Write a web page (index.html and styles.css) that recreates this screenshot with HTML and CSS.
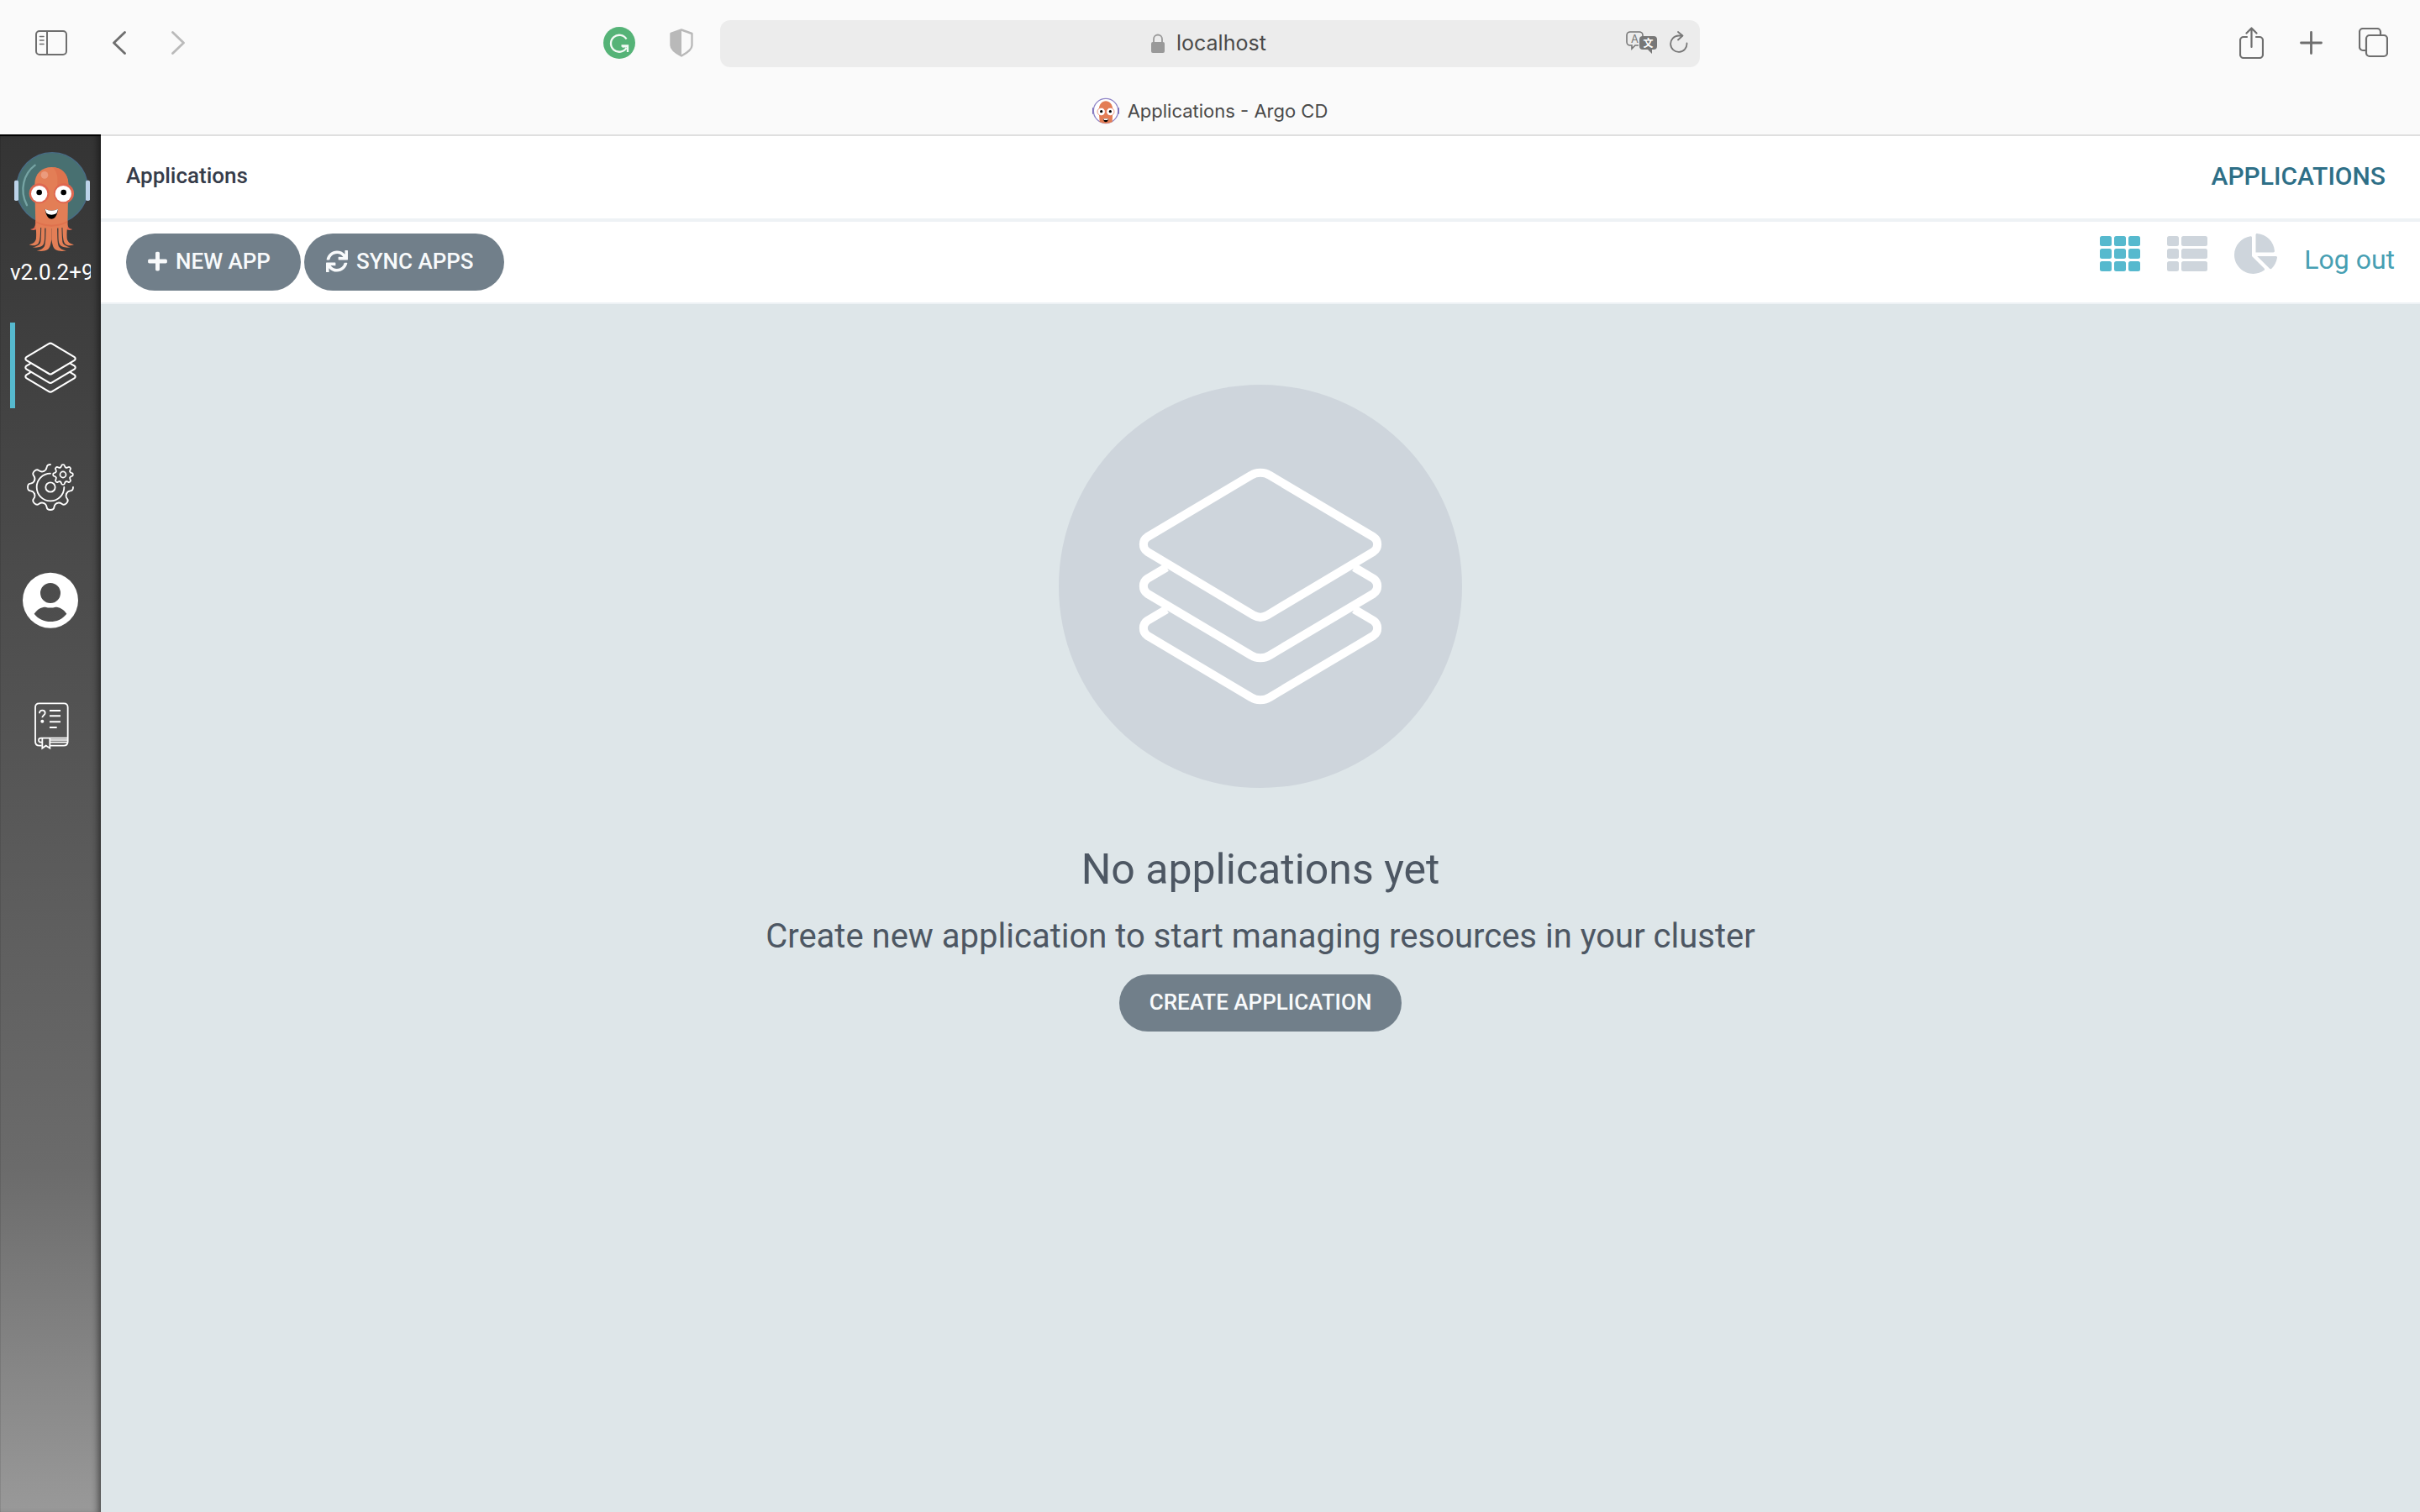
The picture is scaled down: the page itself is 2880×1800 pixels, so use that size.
FILE: index.html
```html
<!DOCTYPE html>
<html lang="en">
<head>
<meta charset="utf-8">
<meta name="viewport" content="width=device-width, initial-scale=1">
<title>Applications - Argo CD</title>
<link rel="stylesheet" href="styles.css">
</head>
<body>
<header class="browser">
  <div class="browser-bar">
    <div class="browser-group">
      <button class="icon-button" type="button" aria-label="Show sidebar">
        <svg width="38" height="30" viewBox="0 0 38 30" fill="none" stroke="#6e6e6e" stroke-width="2"><rect x="1" y="1" width="36" height="28" rx="4"/><path d="M14 1v28"/><path d="M5.500 7.500h4.500M5.500 12h4.500M5.500 16.500h4.500" stroke-width="1.600" stroke-linecap="round"/></svg>
      </button>
      <button class="icon-button" type="button" aria-label="Back">
        <svg width="16" height="28" viewBox="0 0 16 28" fill="none" stroke="#6e6e6e" stroke-width="2.800" stroke-linecap="round" stroke-linejoin="round"><path d="M14.500 1.500 1.500 14l13 12.500"/></svg>
      </button>
      <button class="icon-button" type="button" aria-label="Forward">
        <svg width="16" height="28" viewBox="0 0 16 28" fill="none" stroke="#bababa" stroke-width="2.800" stroke-linecap="round" stroke-linejoin="round"><path d="M1.500 1.500 14.500 14l-13 12.500"/></svg>
      </button>
      <div class="extensions">
        <button class="icon-button" type="button" aria-label="Grammarly">
          <svg width="38" height="38" viewBox="0 0 38 38"><circle cx="19" cy="19" r="19" fill="#55b377"/><path d="M27.500 14.500A10 10 0 1 0 27.500 25M21.500 22.500h7.500v7.500M22.500 23.500 28.500 23" fill="none" stroke="#f2faf5" stroke-width="2.300"/></svg>
        </button>
        <button class="icon-button" type="button" aria-label="Privacy report">
          <svg width="28" height="34" viewBox="0 0 28 34"><path d="M14 1.500 26.500 6V20c0 5-5 8.500-12.500 12.500C6.500 28.500 1.500 25 1.500 20V6Z" fill="none" stroke="#b9b9b9" stroke-width="2.400" stroke-linejoin="round"/><path d="M14 1.500V32.500C6.500 28.500 1.500 25 1.500 20V6Z" fill="#b9b9b9"/></svg>
        </button>
      </div>
    </div>
    <div class="address">
      <svg class="lock" width="16" height="24" viewBox="0 0 16 24"><rect y="10" width="16" height="13" rx="2" fill="#999"/><path d="M3 11V6.500a5 5 0 0 1 10 0V11" fill="none" stroke="#999" stroke-width="1.800"/></svg>
      <input class="address-input" type="text" value="localhost" aria-label="Address">
      <div class="address-tools">
        <button class="icon-button" type="button" aria-label="Translate">
          <svg width="37" height="27" viewBox="0 0 37 27"><path d="M15 17h-4l-4 4v-4H5a4 4 0 0 1-4-4V5a4 4 0 0 1 4-4h11a4 4 0 0 1 4 4v2" fill="none" stroke="#777" stroke-width="1.600"/><text x="10.500" y="13.500" class="glyph-latin">A</text><path d="M20 6h13a4 4 0 0 1 4 4v8a4 4 0 0 1-4 4h-2v5l-5-5h-6a4 4 0 0 1-4-4v-8a4 4 0 0 1 4-4Z" fill="#777"/><text x="26.500" y="18.500" class="glyph-han">文</text></svg>
        </button>
        <button class="icon-button" type="button" aria-label="Reload">
          <svg width="22" height="26" viewBox="0 0 22 26" fill="none" stroke="#777" stroke-width="1.800" stroke-linecap="round" stroke-linejoin="round"><path d="M20.500 14.500A9.700 9.700 0 1 1 10.500 5.500H15M10 1l5.500 4.500L10 10.500"/></svg>
        </button>
      </div>
    </div>
    <div class="browser-group browser-group-end">
      <button class="icon-button" type="button" aria-label="Share">
        <svg width="29" height="38" viewBox="0 0 29 38" fill="none" stroke="#6e6e6e" stroke-width="2.200" stroke-linecap="round" stroke-linejoin="round"><path d="M9 12H5a4 4 0 0 0-4 4v17a4 4 0 0 0 4 4h19a4 4 0 0 0 4-4V16a4 4 0 0 0-4-4h-4M14.500 24V2M8.500 7.500l6-6 6 6"/></svg>
      </button>
      <button class="icon-button" type="button" aria-label="New tab">
        <svg width="27" height="28" viewBox="0 0 27 28" fill="none" stroke="#6e6e6e" stroke-width="2.800" stroke-linecap="round"><path d="M13.500 1.500v25M1.500 14h24"/></svg>
      </button>
      <button class="icon-button" type="button" aria-label="Show all tabs">
        <svg width="35" height="36" viewBox="0 0 35 36" fill="none" stroke="#6e6e6e" stroke-width="2.200"><path d="M9 27H5a4 4 0 0 1-4-4V5a4 4 0 0 1 4-4h17a4 4 0 0 1 4 4v4"/><rect x="9" y="9" width="25" height="25" rx="4"/></svg>
      </button>
    </div>
  </div>
  <div class="tab">
    <svg width="32" height="32" viewBox="60 349 96 96"><circle cx="108" cy="397" r="44" fill="#fff" stroke="#8f84c6" stroke-width="4"/><path d="M61 386v22M155 386v22" stroke="#7568b8" stroke-width="5"/><path d="M83 395c0-44 50-44 50 0l-2 42q-23 10-45 0Z" fill="#e37d55"/><circle cx="92" cy="400" r="14" fill="#fff" stroke="#e06b4c" stroke-width="2"/><circle cx="124" cy="400" r="14" fill="#fff" stroke="#e06b4c" stroke-width="2"/><circle cx="92" cy="399" r="5"/><circle cx="124" cy="399" r="5"/><path d="M99 425h18q-1 12-9 12t-9-12Z"/><path d="M99 425h18l-3 5h-12Z" fill="#fff"/></svg>
    <span>Applications - Argo CD</span>
  </div>
</header>

<div class="app">
  <aside class="sidebar">
    <svg class="logo" width="92" height="120" viewBox="48 90 276 360">
      <circle cx="186" cy="222" r="127" fill="#487071" stroke="#496c86" stroke-width="4"/>
      <rect x="51" y="194" width="15" height="73" rx="5" fill="#bcd3e9"/><rect x="306" y="194" width="15" height="73" rx="5" fill="#bcd3e9"/>
      <path d="M125 140C85 170 68 228 96 283" fill="none" stroke="#76a4a4" stroke-width="7" stroke-linecap="round"/>
      <path d="M126 345q2 22-18 24 14 8 26-3ZM241 345q-2 22 18 24-14 8-26-3Z" fill="#dd6850"/>
      <path d="M124 208c0-38 26-61 60-61s60 23 60 61l-3 152q-57 12-114 0Z" fill="#e37e56"/>
      <g fill="#e37e56">
        <path id="arms" d="M127 355h18c-1 28-1 54-8 64-8 9-22 9-33 5 14-3 24-10 25-24 1-15 0-30-2-45ZM148 355h12c-1 30 1 54-4 66-5 12-23 15-40 12 16-4 27-8 29-20 2-16 2-38 3-58ZM164 355h20v50c-3 16-5 31-15 37-9 5-24 6-38 3 15-3 26-8 29-20 4-15 3-45 4-70Z"/>
        <use href="#arms" transform="translate(368 0) scale(-1 1)"/>
      </g>
      <path d="M188 147c32 0 56 25 56 61v15l-39-11c2-28 0-48-17-65Z" fill="#df734e"/>
      <path d="M127 339q57 28 114 0v6q-57 28-114 0Z" fill="#df724e"/>
      <circle cx="159" cy="175" r="13" fill="#eb9b7d"/>
      <circle cx="140" cy="241" r="36" fill="#df6750"/><circle cx="228" cy="241" r="36" fill="#df6750"/>
      <circle cx="140" cy="242" r="29" fill="#fff"/><circle cx="226" cy="242" r="29" fill="#fff"/>
      <circle cx="140" cy="237" r="10"/><circle cx="227" cy="237" r="10"/>
      <path d="M161 296q23 12 46 0c-2 22-11 36-23 36s-21-14-23-36Z"/><path d="M161 296q23 12 46 0-2 9-5 15-18 13-36 0-3-6-5-15Z" fill="#fff"/>
    </svg>
    <div class="version">v2.0.2+9</div>
    <nav class="nav">
      <a class="nav-item nav-item-active" href="#applications" aria-label="Applications">
        <svg width="84" height="84" viewBox="54 69 252 252"><use href="#layers" transform="translate(13.900 38) scale(.213)"/></svg>
      </a>
      <a class="nav-item" href="#settings" aria-label="Settings">
        <svg width="84" height="84" viewBox="54 498 252 252" fill="none" stroke="#fff" stroke-width="5.500" stroke-linecap="round">
          <defs><path id="tooth" d="M-23.500 57C-14 61-14 66-13 72-12 79-6 81 0 81 6 81 12 79 13 72 14 66 14 61 23.500 57"/></defs>
          <g transform="translate(180 630)">
            <circle r="17"/><path d="M0-49A49 49 0 1 0 49 0"/>
            <use href="#tooth"/><use href="#tooth" transform="rotate(45)"/><use href="#tooth" transform="rotate(90)"/><use href="#tooth" transform="rotate(135)"/><use href="#tooth" transform="rotate(-45)"/>
            <path transform="rotate(180)" d="M0 81C6 81 12 79 13 72 14 66 14 61 23.500 57"/><path transform="rotate(-90)" d="M0 81C-6 81-12 79-13 72-14 66-14 61-23.500 57"/>
          </g>
          <g transform="translate(225 585) scale(.44)" stroke-width="12">
            <circle r="24"/>
            <use href="#tooth"/><use href="#tooth" transform="rotate(45)"/><use href="#tooth" transform="rotate(90)"/><use href="#tooth" transform="rotate(135)"/><use href="#tooth" transform="rotate(180)"/><use href="#tooth" transform="rotate(225)"/><use href="#tooth" transform="rotate(270)"/><use href="#tooth" transform="rotate(315)"/>
          </g>
        </svg>
      </a>
      <a class="nav-item" href="#user" aria-label="User info">
        <svg width="84" height="84" viewBox="54 87 252 252"><path fill="#fff" fill-rule="evenodd" d="M180 95a99 99 0 1 0 0 198 99 99 0 0 0 0-198Zm0 37a36 36 0 1 1 0 72 36 36 0 0 1 0-72Zm-58 110c13-18 26-24 40-24q18 5 36 0c15 0 28 7 40 24-16 20-36 28-58 28s-43-9-58-28Z"/></svg>
      </a>
      <a class="nav-item" href="#help" aria-label="Documentation">
        <svg width="84" height="84" viewBox="54 516 252 252" fill="none" stroke="#fff" stroke-width="5.500"><path d="M149 713h-8q-15 0-15-15V576q0-14 14-14h88q14 0 14 14v122q0 15-15 15h-47"/><path d="M242 686h-95q-9 0-9 7.500t9 7.500h3M180 693h62M180 701h62" stroke-width="5"/><path d="M151 686v36l13-9 14 9v-36"/><path d="M177 588h39M177 607h39M177 628h39M177 648h26" stroke-width="6"/><path d="M141 598q0-11 10-11t10 9c0 9-10 8-10 17"/><circle cx="151" cy="626" r="6" fill="#fff" stroke="none"/></svg>
      </a>
    </nav>
  </aside>

  <main class="main">
    <div class="top-bar">
      <h1 class="breadcrumb">Applications</h1>
      <div class="page-title">Applications</div>
    </div>
    <div class="toolbar">
      <div class="actions">
        <button class="button button-with-icon" type="button"><svg width="23" height="26" viewBox="0 0 448 512" fill="currentColor"><path d="M416 208H272V64c0-17.670-14.330-32-32-32h-32c-17.670 0-32 14.330-32 32v144H32c-17.670 0-32 14.330-32 32v32c0 17.670 14.330 32 32 32h144v144c0 17.670 14.330 32 32 32h32c17.670 0 32-14.330 32-32V304h144c17.670 0 32-14.330 32-32v-32c0-17.670-14.330-32-32-32z"/></svg>New App</button>
        <button class="button button-with-icon" type="button"><svg width="26" height="26" viewBox="0 0 512 512" fill="currentColor"><path d="M440.650 12.570l4 82.770A247.160 247.160 0 0 0 255.830 8C134.730 8 33.910 94.920 12.290 209.820A12 12 0 0 0 24.090 224h49.050a12 12 0 0 0 11.670-9.260 175.910 175.910 0 0 1 317-56.940l-101.460-4.860a12 12 0 0 0-12.570 12v47.410a12 12 0 0 0 12 12H500a12 12 0 0 0 12-12V12a12 12 0 0 0-12-12h-47.370a12 12 0 0 0-11.980 12.570zM255.830 432a175.610 175.610 0 0 1-146-77.800l101.800 4.870a12 12 0 0 0 12.570-12v-47.400a12 12 0 0 0-12-12H12a12 12 0 0 0-12 12V500a12 12 0 0 0 12 12h47.350a12 12 0 0 0 12-12.600l-4.150-82.570A247.170 247.170 0 0 0 255.830 504c121.110 0 221.930-86.920 243.550-201.820a12 12 0 0 0-11.800-14.180h-49.050a12 12 0 0 0-11.670 9.260A175.860 175.860 0 0 1 255.830 432z"/></svg>Sync Apps</button>
      </div>
      <div class="views">
        <button class="icon-button view view-active" type="button" aria-label="Tiles">
          <svg width="48" height="48" viewBox="0 0 48 48" fill="currentColor"><rect y="3" width="14" height="12" rx="2.500"/><rect x="17" y="3" width="14" height="12" rx="2.500"/><rect x="34" y="3" width="14" height="12" rx="2.500"/><rect y="18" width="14" height="12" rx="2.500"/><rect x="17" y="18" width="14" height="12" rx="2.500"/><rect x="34" y="18" width="14" height="12" rx="2.500"/><rect y="33" width="14" height="12" rx="2.500"/><rect x="17" y="33" width="14" height="12" rx="2.500"/><rect x="34" y="33" width="14" height="12" rx="2.500"/></svg>
        </button>
        <button class="icon-button view" type="button" aria-label="List">
          <svg width="48" height="48" viewBox="0 0 48 48" fill="currentColor"><rect y="3" width="14" height="12" rx="2.500"/><rect x="17" y="3" width="31" height="12" rx="2.500"/><rect y="18" width="14" height="12" rx="2.500"/><rect x="17" y="18" width="31" height="12" rx="2.500"/><rect y="33" width="14" height="12" rx="2.500"/><rect x="17" y="33" width="31" height="12" rx="2.500"/></svg>
        </button>
        <button class="icon-button view" type="button" aria-label="Summary">
          <svg width="51" height="48" viewBox="0 0 544 512" fill="currentColor"><path d="M527.790 288H290.500l158.030 158.030c6.040 6.040 15.980 6.530 22.190.68 38.700-36.460 65.320-85.610 73.130-140.860 1.340-9.460-6.510-17.850-16.060-17.850zm-15.830-64.800C503.720 103.740 408.260 8.280 288.800.04 279.680-.59 272 7.100 272 16.240V240h223.770c9.140 0 16.820-7.680 16.190-16.800zM224 288V50.710c0-9.550-8.390-17.400-17.840-16.060C86.990 51.490-4.100 155.600.14 280.370 4.500 408.510 114.830 513.590 243.030 511.980c50.400-.63 96.970-16.870 135.260-44.030 7.900-5.600 8.420-17.230 1.570-24.080L224 288z"/></svg>
        </button>
        <a class="log-out" href="#logout">Log out</a>
      </div>
    </div>
    <section class="empty">
      <svg class="empty-icon" width="480" height="480" viewBox="60 54 1440 1440">
        <circle cx="780" cy="774" r="720" fill="#ced5dc"/>
        <path id="layers" fill="none" stroke="#fff" stroke-width="30" d="M748 377C764 365 796 365 812 377L1184 598C1202 610 1202 638 1184 650L803 878Q780 891 757 878L376 650C358 638 358 610 376 598ZM445 706 376 747C358 759 358 788 376 800L748 1021C764 1033 796 1033 812 1021L1184 800C1202 788 1202 759 1184 747L1115 706M445 856 376 897C358 909 358 938 376 950L748 1171C764 1183 796 1183 812 1171L1184 950C1202 938 1202 909 1184 897L1115 856"/>
      </svg>
      <h2 class="empty-title">No applications yet</h2>
      <p class="empty-text">Create new application to start managing resources in your cluster</p>
      <button class="button" type="button">Create application</button>
    </section>
  </main>
</div>
</body>
</html>
```
FILE: styles.css
```css
* {
  box-sizing: border-box;
}

body {
  display: flex;
  flex-direction: column;
  min-height: 100vh;
  margin: 0;
  font-family: Roboto, "Liberation Sans", sans-serif;
  font-size: 26px;
}

svg {
  display: block;
  flex: none;
}

h1,
h2,
p {
  margin: 0;
}

.icon-button {
  padding: 0;
  border: 0;
  background: none;
  cursor: pointer;
}

/* Browser toolbar */

.browser {
  padding-top: 24px;
  background: #fafafa;
  color: #4a4a4a;
  font-family: Inter, "Liberation Sans", sans-serif;
}

.browser-bar {
  display: grid;
  grid-template-columns: 1fr minmax(0, 1166px) 1fr;
  align-items: center;
}

.browser-group {
  display: flex;
  align-items: center;
  gap: 54px;
  padding: 0 32px 2px 42px;
}

.browser-group-end {
  justify-content: flex-end;
  gap: 43px;
  padding: 0 38px 2px 32px;
}

.extensions {
  display: flex;
  align-items: center;
  gap: 41px;
  margin-left: auto;
}

.address {
  position: relative;
  display: flex;
  align-items: center;
  justify-content: center;
  gap: 14px;
  height: 56px;
  border-radius: 12px;
  background: #ececec;
}

.address-input {
  width: 110px;
  padding: 0 0 2px;
  border: 0;
  background: none;
  color: inherit;
  font: inherit;
  font-size: 25px;
}

.address-tools {
  position: absolute;
  right: 14px;
  display: flex;
  align-items: center;
  gap: 15px;
  padding-bottom: 4px;
}

.glyph-latin {
  fill: #777;
  font-family: Inter, sans-serif;
  font-size: 13px;
  text-anchor: middle;
}

.glyph-han {
  fill: #fff;
  font-family: "Noto Sans CJK SC", sans-serif;
  font-size: 12px;
  font-weight: 700;
  text-anchor: middle;
}

.tab {
  display: flex;
  align-items: center;
  justify-content: center;
  gap: 10px;
  height: 56px;
  margin-top: 24px;
  font-size: 22px;
}

/* Application shell */

.app {
  display: flex;
  flex: 1;
}

.sidebar {
  flex: none;
  width: 120px;
  padding: 20px 12px 0;
  background: linear-gradient(#343434, #6b6b6b 75%, #999);
  box-shadow: inset -8px 0 10px -6px rgba(0, 0, 0, 0.6), inset 0 2px 1px #000;
  color: #fff;
}

.logo {
  margin-left: 4px;
}

.version {
  margin-top: 6px;
  overflow: hidden;
  line-height: 36px;
  white-space: nowrap;
}

.nav {
  display: flex;
  flex-direction: column;
  gap: 41px;
  margin-top: 42px;
}

.nav-item {
  display: flex;
  align-items: center;
  height: 102px;
  padding-left: 6px;
}

.nav-item-active {
  padding-left: 0;
  border-left: 6px solid #56b9ce;
}

.main {
  display: flex;
  flex: 1;
  flex-direction: column;
  min-width: 0;
  border-top: 2px solid #dfdfdf;
  background: #dee6e9;
}

.top-bar {
  display: flex;
  align-items: center;
  justify-content: space-between;
  height: 102px;
  padding: 0 41px 4px 30px;
  border-bottom: 4px solid #eef2f5;
  background: #fff;
}

.breadcrumb {
  color: #363c4a;
  font-size: 26px;
  font-weight: 500;
}

.page-title {
  color: #2e6f87;
  font-size: 30px;
  font-weight: 500;
  text-transform: uppercase;
}

.toolbar {
  display: flex;
  align-items: flex-start;
  justify-content: space-between;
  padding: 14px 30px;
  border-bottom: 2px solid #eef2f5;
  background: #fff;
}

.actions {
  display: flex;
  gap: 4px;
}

.button {
  display: flex;
  align-items: center;
  gap: 10px;
  height: 68px;
  padding: 0 36px 2px;
  border: 0;
  border-radius: 34px;
  background: #717f8a;
  color: #f8fafb;
  font: inherit;
  font-weight: 500;
  text-transform: uppercase;
  cursor: pointer;
}

.button-with-icon {
  padding-left: 26px;
}

.views {
  display: flex;
  align-items: flex-start;
  gap: 32px;
}

.view {
  color: #ced5dc;
}

.view-active {
  color: #56b9ce;
}

.log-out {
  color: #479fb3;
  font-size: 32px;
  line-height: 62px;
  text-decoration: none;
}

/* Empty state */

.empty {
  display: flex;
  flex-direction: column;
  align-items: center;
  padding: 96px 30px;
  color: #4d5763;
  text-align: center;
}

.empty-title {
  margin-top: 64px;
  font-size: 50px;
  font-weight: 400;
  line-height: 66px;
}

.empty-text {
  margin: 18px 0 16px;
  font-size: 40px;
  line-height: 58px;
}
```
